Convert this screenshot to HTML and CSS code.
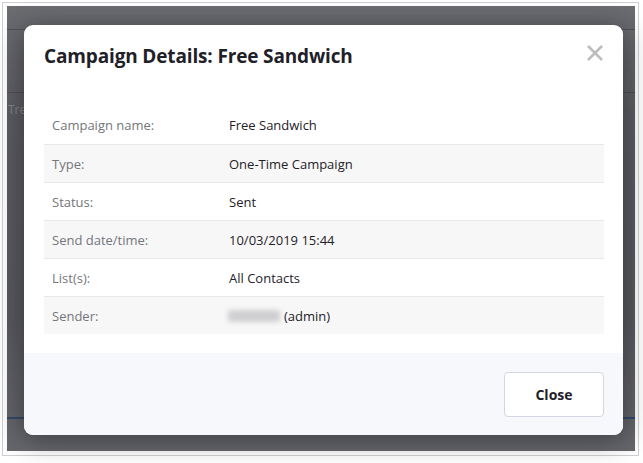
FILE: index.html
```html
<!DOCTYPE html>
<html lang="en">
<head>
<meta charset="utf-8">
<title>Campaign Details</title>
<link rel="stylesheet" href="styles.css">
</head>
<body>
<div class="frame">
  <div class="screen">
    <span class="bg-text">Tre</span>
    <div class="modal">
      <div class="modal-header">
        <h1 class="modal-title">Campaign Details: Free Sandwich</h1>
        <svg class="close-x" width="20" height="20" viewBox="0 0 20 20" aria-hidden="true">
          <path d="M3 3 L17 17 M17 3 L3 17" stroke="#bdbdbf" stroke-width="2.6" stroke-linecap="butt" fill="none"/>
        </svg>
      </div>
      <div class="modal-body">
        <div class="details">
          <div class="row"><div class="label">Campaign name:</div><div class="value">Free Sandwich</div></div>
          <div class="row"><div class="label">Type:</div><div class="value">One-Time Campaign</div></div>
          <div class="row"><div class="label">Status:</div><div class="value">Sent</div></div>
          <div class="row"><div class="label">Send date/time:</div><div class="value">10/03/2019 15:44</div></div>
          <div class="row"><div class="label">List(s):</div><div class="value">All Contacts</div></div>
          <div class="row"><div class="label">Sender:</div><div class="value"><span class="blurred"></span>(admin)</div></div>
        </div>
      </div>
      <div class="modal-footer">
        <button class="btn-close" type="button">Close</button>
      </div>
    </div>
  </div>
</div>
</body>
</html>
```

FILE: styles.css
```css
html, body {
  margin: 0;
  padding: 0;
  background: #ffffff;
}

body {
  width: 643px;
  height: 463px;
  overflow: hidden;
  font-family: "Open Sans", "Noto Sans", sans-serif;
}

.frame {
  margin: 2px 2px 0 2px;
  width: 637px;
  height: 454px;
  box-sizing: border-box;
  border: 1px solid #cfcfd1;
  padding: 3px 3px 4px 4px;
  background: #ffffff;
}

.screen {
  position: relative;
  height: 100%;
  box-sizing: border-box;
  padding: 19px 14px 0 17px;
  background-color: #5e5f64;
  background-image:
    linear-gradient(to bottom, transparent 23px, rgba(40,40,45,0.35) 23px, rgba(40,40,45,0.35) 24px, transparent 24px),
    linear-gradient(to bottom, transparent 86px, rgba(40,40,45,0.3) 86px, rgba(40,40,45,0.3) 87px, transparent 87px),
    linear-gradient(to bottom, transparent 411px, #34486a 411px, #34486a 413px, transparent 413px),
    linear-gradient(to bottom, #6c6d71 0%, #5b5c61 25%, #58595e 70%, #67686c 100%);
}

.bg-text {
  position: absolute;
  left: 1px;
  top: 95px;
  font-size: 12px;
  color: #85868a;
}

.modal {
  position: relative;
  width: 599px;
  height: 410px;
  background: #ffffff;
  border-radius: 9px;
  box-shadow: 0 4px 28px rgba(20, 20, 25, 0.5);
  display: flex;
  flex-direction: column;
  overflow: hidden;
}

.modal-header {
  display: flex;
  justify-content: space-between;
  align-items: flex-start;
  padding: 18px 18px 0 20px;
}

.modal-title {
  margin: 1px 0 0 0;
  font-size: 19px;
  line-height: 24px;
  font-weight: 700;
  color: #1f2129;
  letter-spacing: -0.15px;
}

.close-x {
  display: block;
}

.modal-body {
  padding: 38px 19px 19px 20px;
}

.details {
  display: flex;
  flex-direction: column;
}

.row {
  display: flex;
  align-items: center;
  height: 38px;
  box-sizing: border-box;
  font-size: 13px;
}

.row + .row {
  border-top: 1px solid #e8e8ea;
}

.row:nth-child(even) {
  background: #f7f7f7;
}

.label {
  width: 177px;
  padding-left: 8px;
  color: #74767b;
}

.value {
  display: flex;
  align-items: center;
  color: #1f2129;
}

.blurred {
  display: inline-block;
  width: 52px;
  height: 12px;
  margin: 0 4px 0 -1px;
  background: #cfcfd1;
  border-radius: 3px;
  filter: blur(2.5px);
}

.modal-footer {
  flex: 1;
  display: flex;
  justify-content: flex-end;
  align-items: flex-start;
  padding: 19px 19px 0 20px;
  background: #f7f8fc;
}

.btn-close {
  width: 100px;
  height: 45px;
  background: #ffffff;
  border: 1px solid #d3d6e0;
  border-radius: 4px;
  font-family: "Open Sans", "Noto Sans", sans-serif;
  font-size: 14px;
  font-weight: 700;
  color: #1f2129;
  cursor: pointer;
}
```
